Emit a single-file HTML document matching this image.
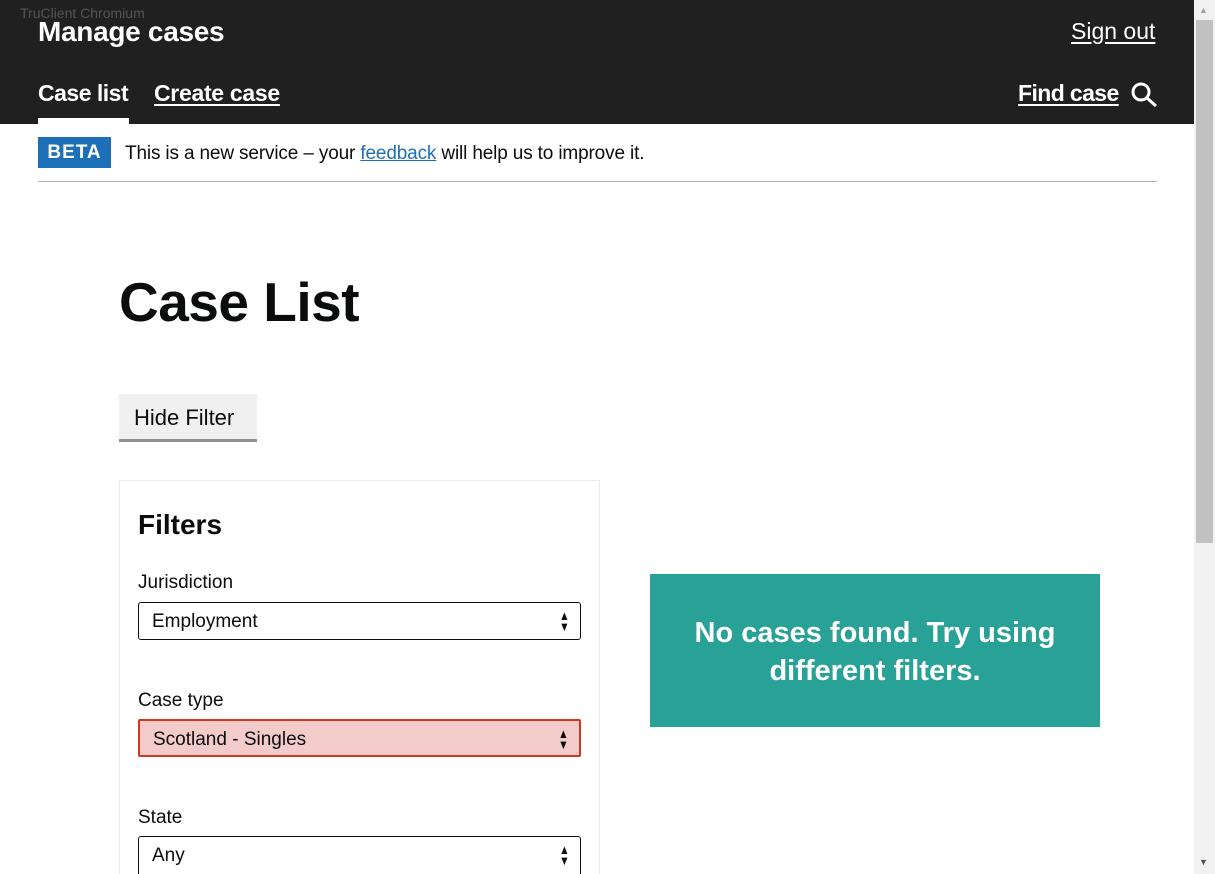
<!DOCTYPE html>
<html><head><style>
*{margin:0;padding:0;box-sizing:border-box}
html{overflow:hidden;height:874px}
body{width:1215px;height:874px;overflow:hidden;position:relative;background:#fff;font-family:"Liberation Sans",sans-serif;color:#0b0c0c}
.hd{position:absolute;left:0;top:0;width:1194px;height:124px;background:#202020;color:#fff}
.a{position:absolute;font-weight:bold;color:#fff;white-space:nowrap}
.u{text-decoration:underline;text-underline-offset:3px}
.sb{position:absolute;left:1194px;top:0;width:21px;height:874px;background:#f1f1f1}
.th{position:absolute;left:1196px;top:20px;width:17px;height:523px;background:#c1c1c1}
.sel{position:absolute;left:138px;width:443px;height:38px;border:1.5px solid #0b0c0c;border-radius:3px;font-size:19px;padding:8px 13px}
.arr{position:absolute;right:9px;top:7px;font-size:13px;line-height:11px;transform:scaleX(.8)}
.lbl{position:absolute;left:138px;font-size:19px}
</style></head><body>
<div class="hd">
<div style="position:absolute;left:20px;top:5px;font-size:14px;color:#555">TruClient Chromium</div>
<div class="a" style="left:38px;top:16px;font-size:28px;letter-spacing:-0.3px">Manage cases</div>
<div class="a u" style="left:1071px;top:18px;font-size:23px;font-weight:normal">Sign out</div>
<div class="a" style="left:38px;top:80px;font-size:23px;letter-spacing:-0.5px">Case list</div>
<div style="position:absolute;left:38px;top:118px;width:91px;height:6px;background:#fff"></div>
<div class="a u" style="left:154px;top:80px;font-size:23px;letter-spacing:-0.3px">Create case</div>
<div class="a u" style="left:1018px;top:80px;font-size:23px;letter-spacing:-0.6px">Find case</div>
<svg style="position:absolute;left:1131px;top:82px" width="28" height="26" viewBox="0 0 28 26"><circle cx="10" cy="10" r="8" fill="none" stroke="#fff" stroke-width="3"/><line x1="16" y1="16" x2="25" y2="24" stroke="#fff" stroke-width="3"/></svg>
</div>
<div style="position:absolute;left:38px;top:137px;width:73px;height:31px;background:#1d70b8;color:#fff;font-weight:bold;font-size:19px;text-align:center;line-height:31px;letter-spacing:1px">BETA</div>
<div style="position:absolute;left:125px;top:143px;font-size:19px;letter-spacing:-0.15px">This is a new service – your <span style="color:#1d70b8;text-decoration:underline">feedback</span> will help us to improve it.</div>
<div style="position:absolute;left:38px;top:181px;width:1119px;height:1px;background:#b1b4b6"></div>
<div style="position:absolute;left:119px;top:270px;font-size:55px;font-weight:bold;letter-spacing:-0.5px">Case List</div>
<div style="position:absolute;left:119px;top:394px;width:138px;height:48px;background:#f0f0f0;border-bottom:3px solid #929191;font-size:22px;padding:11px 15px">Hide Filter</div>
<div style="position:absolute;left:119px;top:480px;width:481px;height:394px;border:1px solid #ebebeb;border-bottom:none"></div>
<div style="position:absolute;left:138px;top:509px;font-size:28px;font-weight:bold">Filters</div>
<div class="lbl" style="top:572px">Jurisdiction</div>
<div class="sel" style="top:602px">Employment<span class="arr">▲<br>▼</span></div>
<div class="lbl" style="top:690px">Case type</div>
<div class="sel" style="top:719px;background:#f3cbcb;border:2px solid #d4351c;border-radius:2px">Scotland - Singles<span class="arr">▲<br>▼</span></div>
<div class="lbl" style="top:807px">State</div>
<div class="sel" style="top:836px;height:38px;border-bottom:none;border-radius:3px 3px 0 0">Any<span class="arr">▲<br>▼</span></div>
<div style="position:absolute;left:650px;top:574px;width:450px;height:153px;background:#28a197;color:#fff;font-weight:bold;font-size:29px;text-align:center;padding-top:40px;line-height:38px">No cases found. Try using<br>different filters.</div>
<div class="sb"></div><div class="th"></div>
<div style="position:absolute;left:1199px;top:5px;font-size:9px;color:#a3a3a3">▲</div>
<div style="position:absolute;left:1199px;top:857px;font-size:9px;color:#505050">▼</div>
</body></html>
